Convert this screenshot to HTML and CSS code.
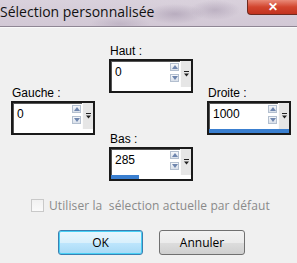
FILE: index.html
```html
<!DOCTYPE html>
<html lang="fr">

<head>
    <meta charset="UTF-8">
    <title>Sélection personnalisée</title>
    <link rel="stylesheet" href="styles.css">
</head>

<body>
    <div class="window">
        <div class="titlebar">
            <span class="title">Sélection personnalisée</span>
            <span class="close">&#10005;</span>
        </div>
        <div class="content">
            <div class="fields">
                <div class="col side">
                    <div class="field">
                        <div class="label">Gauche :</div>
                        <div class="spin">
                            <div class="row">
                                <span class="value">0</span>
                                <span class="arrows"><span class="arr up"></span><span class="arr down"></span></span>
                                <span class="drop"><svg width="5" height="6" viewBox="0 0 5 6"><rect x="0" y="0" width="5" height="1" fill="#222"/><polygon points="0,2.5 5,2.5 2.5,5.5" fill="#222"/></svg></span>
                            </div>
                            <span class="bar" style="width:0%"></span>
                        </div>
                    </div>
                </div>
                <div class="col mid">
                    <div class="field">
                        <div class="label">Haut :</div>
                        <div class="spin">
                            <div class="row">
                                <span class="value">0</span>
                                <span class="arrows"><span class="arr up"></span><span class="arr down"></span></span>
                                <span class="drop"><svg width="5" height="6" viewBox="0 0 5 6"><rect x="0" y="0" width="5" height="1" fill="#222"/><polygon points="0,2.5 5,2.5 2.5,5.5" fill="#222"/></svg></span>
                            </div>
                            <span class="bar" style="width:0%"></span>
                        </div>
                    </div>
                    <div class="field">
                        <div class="label">Bas :</div>
                        <div class="spin">
                            <div class="row">
                                <span class="value">285</span>
                                <span class="arrows"><span class="arr up"></span><span class="arr down"></span></span>
                                <span class="drop"><svg width="5" height="6" viewBox="0 0 5 6"><rect x="0" y="0" width="5" height="1" fill="#222"/><polygon points="0,2.5 5,2.5 2.5,5.5" fill="#222"/></svg></span>
                            </div>
                            <span class="bar" style="width:35%"></span>
                        </div>
                    </div>
                </div>
                <div class="col side">
                    <div class="field">
                        <div class="label">Droite :</div>
                        <div class="spin">
                            <div class="row">
                                <span class="value">1000</span>
                                <span class="arrows"><span class="arr up"></span><span class="arr down"></span></span>
                                <span class="drop"><svg width="5" height="6" viewBox="0 0 5 6"><rect x="0" y="0" width="5" height="1" fill="#222"/><polygon points="0,2.5 5,2.5 2.5,5.5" fill="#222"/></svg></span>
                            </div>
                            <span class="bar" style="width:100%"></span>
                        </div>
                    </div>
                </div>
            </div>
            <div class="check">
                <span class="checkbox"></span>
                <span class="check-text">Utiliser la&nbsp; sélection actuelle par défaut</span>
            </div>
            <div class="buttons">
                <button class="btn default">OK</button>
                <button class="btn">Annuler</button>
            </div>
        </div>
    </div>
</body>

</html>
```

FILE: styles.css
```css
/* Reset */
body {
    margin: 0;
    padding: 0;
    background-color: #f0f0f0;
    font-family: 'Liberation Sans', Arial, sans-serif;
}

.window {
    width: 297px;
    height: 263px;
    overflow: hidden;
    background-color: #f0f0f0;
}

/* Aero style title bar */
.titlebar {
    height: 26px;
    display: flex;
    justify-content: space-between;
    align-items: flex-start;
    background:
        radial-gradient(ellipse 30px 10px at 175px 14px, rgba(150, 135, 160, 0.45), transparent),
        radial-gradient(ellipse 25px 10px at 215px 10px, rgba(150, 135, 160, 0.4), transparent),
        radial-gradient(ellipse 30px 8px at 120px 24px, rgba(150, 135, 160, 0.3), transparent),
        linear-gradient(#d9d1dc, #d2c8d5);
    border-bottom: 1px solid #8f8694;
}

.title {
    font-family: 'Open Sans', 'Noto Sans', sans-serif;
    font-size: 14px;
    color: #111;
    padding: 2px 0 0 0;
}

.close {
    width: 50px;
    height: 15px;
    box-sizing: border-box;
    display: flex;
    align-items: center;
    justify-content: center;
    color: #fff;
    font-size: 12px;
    font-weight: bold;
    background: linear-gradient(#e98a78, #d2452e 50%, #c2331f);
    border: 1px solid #6e2a1f;
    border-top: none;
    border-right: none;
    border-radius: 0 0 0 4px;
}

.content {
    border-top: 1px solid #fafafa;
}

/* Field layout */
.fields {
    display: flex;
    gap: 14px;
    padding: 16px 0 0 11px;
}

.col {
    display: flex;
    flex-direction: column;
}

.side {
    padding-top: 42px;
}

.mid {
    gap: 39px;
}

.label {
    font-size: 12px;
    color: #000;
    height: 14px;
    line-height: 14px;
    padding-left: 1px;
    margin-bottom: 1px;
}

.spin {
    width: 84px;
    height: 34px;
    box-sizing: border-box;
    border: 2px solid #1a1a1a;
    box-shadow: inset 1px 1px 0 #555;
    background-color: #fff;
    display: flex;
    flex-direction: column;
}

.row {
    flex: 1;
    display: flex;
}

.value {
    flex: 1;
    font-size: 12px;
    padding: 4px 0 0 4px;
    color: #000;
}

.arrows {
    display: flex;
    flex-direction: column;
    gap: 3px;
    padding: 2px 1px 0 0;
}

.arr {
    width: 9px;
    height: 8px;
    box-sizing: border-box;
    border: 1px solid #b3bfcf;
    background: linear-gradient(#f6f8fb, #d9e0ea);
    display: flex;
    align-items: center;
    justify-content: center;
}

.arr::after {
    content: "";
    border-left: 3px solid transparent;
    border-right: 3px solid transparent;
}

.up::after {
    border-bottom: 4px solid #6f86ae;
}

.down::after {
    border-top: 4px solid #6f86ae;
}

.drop {
    width: 11px;
    background-color: #e6e6e6;
    border-left: 1px solid #fbfbfb;
    display: flex;
    justify-content: center;
    padding-top: 10px;
    box-sizing: border-box;
}

.bar {
    height: 4px;
    background-color: #3a7fd0;
}

/* Checkbox */
.check {
    display: flex;
    align-items: center;
    gap: 5px;
    padding: 16px 0 0 31px;
}

.checkbox {
    width: 13px;
    height: 13px;
    box-sizing: border-box;
    border: 1px solid #c9c9c9;
    background: linear-gradient(#f1f1f1, #fafafa);
}

.check-text {
    font-family: 'Open Sans', 'Noto Sans', sans-serif;
    font-size: 12px;
    letter-spacing: 0.1px;
    color: #8a8a8a;
}

/* Buttons */
.buttons {
    display: flex;
    gap: 16px;
    padding: 16px 0 0 58px;
}

.btn {
    width: 86px;
    height: 25px;
    font-family: 'Open Sans', 'Noto Sans', sans-serif;
    font-size: 12px;
    color: #000;
    border: 1px solid #707070;
    border-radius: 3px;
    background: linear-gradient(#f2f2f2, #ebebeb 50%, #dddddd 51%, #cfcfcf);
    padding: 0;
}

.default {
    width: 85px;
    border-color: #3c7fb1;
    background: linear-gradient(#eaf6fd, #d9f0fc 50%, #bee6fd 51%, #a7d9f5);
    box-shadow: inset 0 0 0 1px #48d0f5;
}
```
